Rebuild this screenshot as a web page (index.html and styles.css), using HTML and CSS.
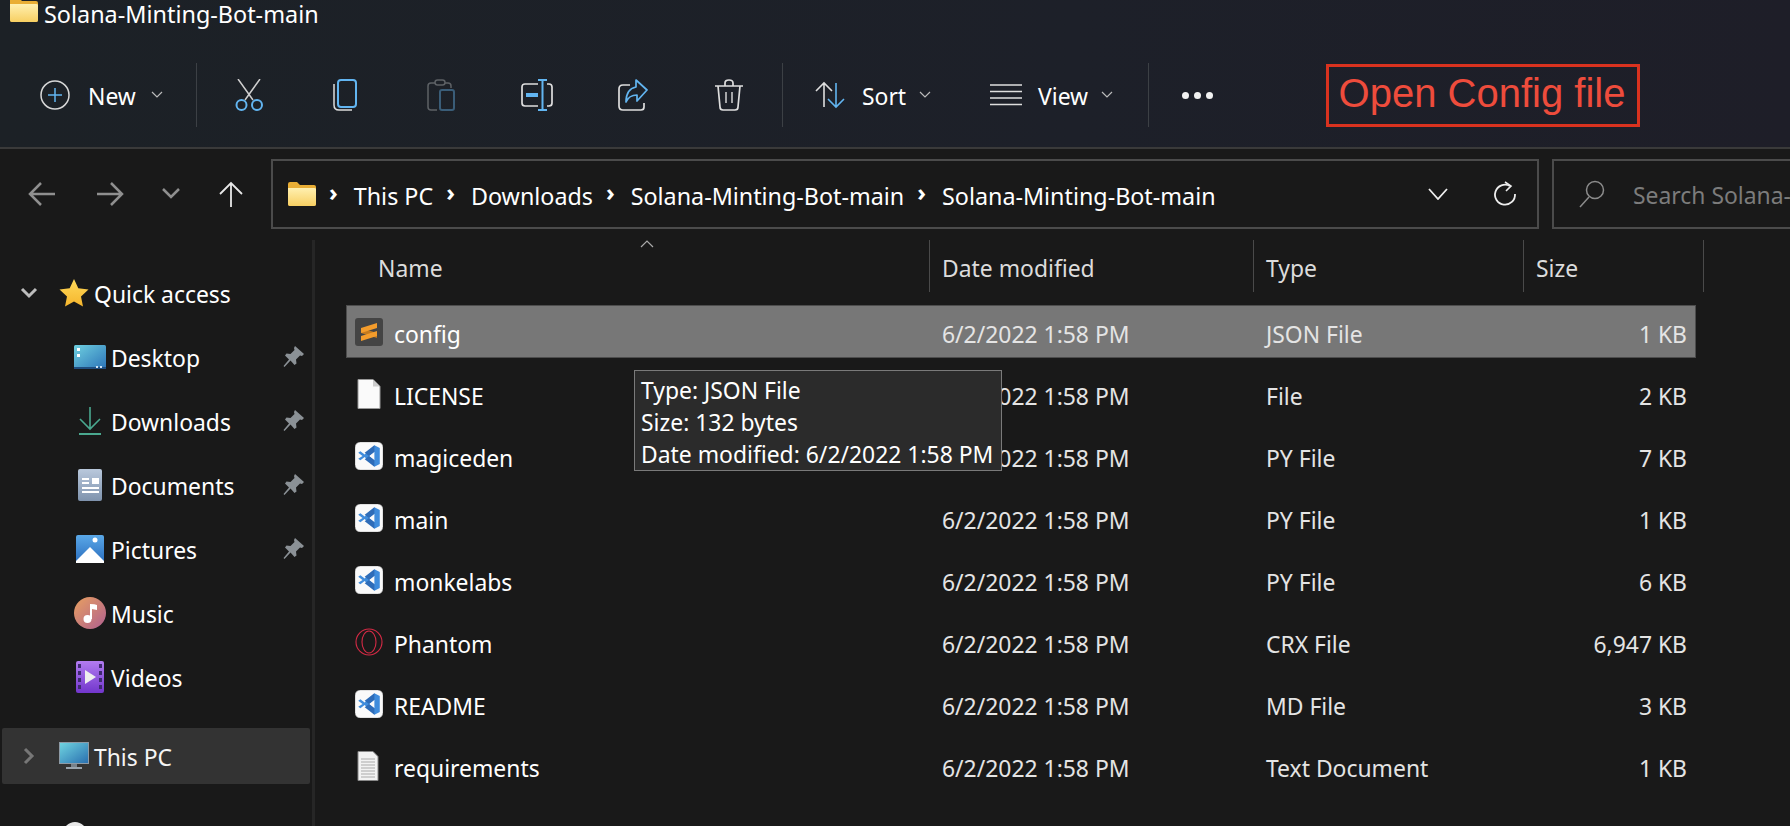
FILE: index.html
```html
<!DOCTYPE html>
<html lang="en">
<head>
    <meta charset="UTF-8">
    <title>Solana-Minting-Bot-main</title>
    <link rel="stylesheet" href="styles.css">
</head>
<body>
    <svg class="defs" width="0" height="0">
        <defs>
            <linearGradient id="folderGrad" x1="0" y1="0" x2="0" y2="1">
                <stop offset="0" stop-color="#fff0b0"/>
                <stop offset="1" stop-color="#f7cf62"/>
            </linearGradient>
            <symbol id="folder" viewBox="0 0 28 24">
                <path d="M0 2q0-2 2-2h7l3 3h14q2 0 2 2v17q0 2-2 2H2q-2 0-2-2z" fill="#e9ae35"/>
                <path d="M0 6h26q2 0 2 1v15q0 2-2 2H2q-2 0-2-2z" fill="url(#folderGrad)"/>
            </symbol>
            <symbol id="pin" viewBox="0 0 22 22">
                <path d="M12 1l9 8-2 2-2-.5-4 4 .5 4-2 1.500-4-4.500-6 6.500-1-1 5.500-6.500-4-4 1.500-2 4 .5 4-4-.5-2z" fill="#8b9196"/>
            </symbol>
            <symbol id="vscode" viewBox="0 0 26 26">
                <rect width="26" height="26" rx="5" fill="#fafafa" stroke="#999" stroke-width=".5"/>
                <path d="M18 3l5 2.500v15l-5 2.500-9-9-4 3-2-1.500 4-2.500-4-3 2-1.500 4 3zM18 9l-5 4 5 4z" fill="#3f8cdc"/>
                <path d="M18 3v6l-5 4-4-3z" fill="#2e6cb8"/>
                <path d="M9 16l4-3 5 4v6z" fill="#2e6cb8"/>
            </symbol>
        </defs>
    </svg>

    <div class="window">
        <header class="chrome">
            <div class="title-row">
                <svg class="title-icon" width="28" height="24"><use href="#folder"/></svg>
                <span>Solana-Minting-Bot-main</span>
            </div>
            <div class="toolbar">
                <button class="tool tool-new">
                    <svg width="30" height="30" viewBox="0 0 30 30" fill="none">
                        <circle cx="15" cy="15" r="14" stroke="#d8d8d8" stroke-width="1.500"/>
                        <path d="M15 8v14M8 15h14" stroke="#62b5f1" stroke-width="1.500"/>
                    </svg>
                    <span>New</span>
                    <svg class="caret" width="12" height="8" viewBox="0 0 12 8" fill="none"><path d="M1 1l5 5 5-5" stroke="#bbb" stroke-width="1.200"/></svg>
                </button>
                <div class="tool-sep"></div>
                <div class="tool-icons">
                    <button class="tool-icon">
                        <svg width="28" height="32" viewBox="0 0 28 32" fill="none">
                            <path d="M3 0l15 21M25 0L10 21" stroke="#cfcfcf" stroke-width="1.500"/>
                            <circle cx="6.500" cy="26" r="5" stroke="#62b5f1" stroke-width="2"/>
                            <circle cx="22" cy="26" r="5" stroke="#62b5f1" stroke-width="2"/>
                        </svg>
                    </button>
                    <button class="tool-icon">
                        <svg width="24" height="32" viewBox="0 0 24 32" fill="none">
                            <path d="M1 5v21q0 5 5 5h13" stroke="#dcdcdc" stroke-width="1.500"/>
                            <rect x="5" y="1" width="18" height="27" rx="3" stroke="#62b5f1" stroke-width="2"/>
                        </svg>
                    </button>
                    <button class="tool-icon">
                        <svg width="28" height="32" viewBox="0 0 28 32" fill="none">
                            <path d="M10 31H4q-3 0-3-3V7q0-3 3-3h4M18 4h3q3 0 3 3v2" stroke="#5d6165" stroke-width="1.500"/>
                            <rect x="8" y="1" width="10" height="5" rx="2.500" stroke="#5d6165" stroke-width="1.500"/>
                            <rect x="13" y="11" width="14" height="20" rx="2" stroke="#3a5d78" stroke-width="2"/>
                        </svg>
                    </button>
                    <button class="tool-icon">
                        <svg width="32" height="32" viewBox="0 0 32 32" fill="none">
                            <path d="M17 5H4q-3 0-3 3v16q0 3 3 3h13M26 5h2q3 0 3 3v16q0 3-3 3h-2" stroke="#dedede" stroke-width="1.700"/>
                            <path d="M5 16h12" stroke="#62b5f1" stroke-width="4"/>
                            <path d="M17 1h9M21.500 1v30M17 31h9" stroke="#62b5f1" stroke-width="2"/>
                        </svg>
                    </button>
                    <button class="tool-icon">
                        <svg width="30" height="32" viewBox="0 0 30 32" fill="none">
                            <path d="M12 6H5Q1 6 1 10v17q0 4 4 4h18q3 0 3-3v-4" stroke="#dedede" stroke-width="1.700"/>
                            <path d="M18 1l11 10-10 11v-6q-8 0-11 7 0-13 10-15z" stroke="#62b5f1" stroke-width="1.700" stroke-linejoin="round"/>
                        </svg>
                    </button>
                    <button class="tool-icon">
                        <svg width="30" height="32" viewBox="0 0 30 32" fill="none" stroke="#dedede" stroke-width="1.700">
                            <path d="M1 7h28M11 7V4q0-3 4-3t4 3v3M4 7l2 21q0 3 3 3h12q3 0 3-3l2-21"/>
                            <path d="M12 13v11M18 13v11" stroke-width="1.400"/>
                        </svg>
                    </button>
                </div>
                <div class="tool-sep"></div>
                <button class="tool tool-sort">
                    <svg width="32" height="28" viewBox="0 0 32 28" fill="none">
                        <path d="M10 26V2M2 10l8-8 8 8" stroke="#dedede" stroke-width="1.600"/>
                        <path d="M22 2v24M14 18l8 8 8-8" stroke="#62b5f1" stroke-width="1.600"/>
                    </svg>
                    <span>Sort</span>
                    <svg class="caret" width="12" height="8" viewBox="0 0 12 8" fill="none"><path d="M1 1l5 5 5-5" stroke="#bbb" stroke-width="1.200"/></svg>
                </button>
                <button class="tool tool-view">
                    <svg width="32" height="22" viewBox="0 0 32 22" fill="none" stroke="#dedede" stroke-width="1.500">
                        <path d="M0 1h32M0 7.500h32M0 14h32M0 20.500h32"/>
                    </svg>
                    <span>View</span>
                    <svg class="caret" width="12" height="8" viewBox="0 0 12 8" fill="none"><path d="M1 1l5 5 5-5" stroke="#bbb" stroke-width="1.200"/></svg>
                </button>
                <div class="tool-sep"></div>
                <div class="tool-more"><i></i><i></i><i></i></div>
            </div>
        </header>

        <div class="nav-row">
            <div class="nav-buttons">
                <svg width="28" height="26" viewBox="0 0 28 26" fill="none" stroke="#8f8f8f" stroke-width="2.500"><path d="M28 13H3M14 2L3 13l11 11"/></svg>
                <svg width="28" height="26" viewBox="0 0 28 26" fill="none" stroke="#8f8f8f" stroke-width="2.500"><path d="M0 13h25M14 2l11 11-11 11"/></svg>
                <svg width="18" height="12" viewBox="0 0 18 12" fill="none" stroke="#8f8f8f" stroke-width="2.500"><path d="M1 1l8 8 8-8"/></svg>
                <svg width="24" height="26" viewBox="0 0 24 26" fill="none" stroke="#e8e8e8" stroke-width="1.800"><path d="M12 26V2M1 13L12 2l11 11"/></svg>
            </div>
            <div class="address">
                <svg class="address-folder" width="28" height="24"><use href="#folder"/></svg>
                <span class="crumb-sep">›</span>
                <span>This PC</span>
                <span class="crumb-sep">›</span>
                <span>Downloads</span>
                <span class="crumb-sep">›</span>
                <span>Solana-Minting-Bot-main</span>
                <span class="crumb-sep">›</span>
                <span>Solana-Minting-Bot-main</span>
                <svg class="address-down" width="20" height="12" viewBox="0 0 20 12" fill="none" stroke="#eee" stroke-width="1.800"><path d="M1 1l9 10 9-10"/></svg>
                <svg class="address-refresh" width="24" height="26" viewBox="0 0 24 26" fill="none" stroke="#eee" stroke-width="1.800">
                    <path d="M17 5a10 10 0 1 0 5 8"/>
                    <path d="M12 1l6 4-5 5" stroke-width="1.600"/>
                </svg>
            </div>
            <div class="search">
                <svg width="26" height="28" viewBox="0 0 26 28" fill="none" stroke="#8c8c8c" stroke-width="1.500">
                    <circle cx="16" cy="10" r="8.500"/>
                    <path d="M10 17L1 27"/>
                </svg>
                <span>Search Solana-Minting-Bot-main</span>
            </div>
        </div>

        <div class="content">
            <aside class="sidebar">
                <div class="tree-row tree-top">
                    <svg class="tree-toggle" width="18" height="12" viewBox="0 0 18 12" fill="none" stroke="#bdbdbd" stroke-width="3"><path d="M2 2l7 7 7-7"/></svg>
                    <svg class="tree-icon-top" width="30" height="30" viewBox="0 0 30 30">
                        <defs><linearGradient id="starGrad" x1="0" y1="0" x2="0" y2="1"><stop offset="0" stop-color="#ffd95a"/><stop offset="1" stop-color="#f5b52c"/></linearGradient></defs>
                        <path d="M15 1l4.300 9.300 10.200 1.200-7.500 7 2 10.100-9-5-9 5 2-10.100-7.500-7 10.200-1.200z" fill="url(#starGrad)"/>
                    </svg>
                    <span>Quick access</span>
                </div>
                <div class="tree-row tree-child">
                    <svg class="tree-icon" width="32" height="24" viewBox="0 0 32 24">
                        <defs><linearGradient id="deskGrad" x1="0" y1="0" x2="1" y2="1"><stop offset="0" stop-color="#6fd0e0"/><stop offset="1" stop-color="#2c74b8"/></linearGradient></defs>
                        <rect width="32" height="24" rx="1.500" fill="url(#deskGrad)"/>
                        <rect y="22" width="32" height="2" fill="#1f4e80"/>
                        <path d="M3 3h3v3H3zM3 9h3v3H3z" fill="#fff"/>
                        <path d="M22 21h2v2h-2zM26 21h2v2h-2z" fill="#cfe4f5"/>
                    </svg>
                    <span>Desktop</span>
                    <svg class="tree-pin" width="22" height="22"><use href="#pin"/></svg>
                </div>
                <div class="tree-row tree-child">
                    <svg class="tree-icon" width="32" height="28" viewBox="0 0 32 28" fill="none" stroke="#4aa88f" stroke-width="1.600">
                        <path d="M16 0v21M6 12l10 10 10-10"/>
                        <path d="M5 27h22" stroke-width="2"/>
                    </svg>
                    <span>Downloads</span>
                    <svg class="tree-pin" width="22" height="22"><use href="#pin"/></svg>
                </div>
                <div class="tree-row tree-child">
                    <svg class="tree-icon" width="32" height="32" viewBox="0 0 32 32">
                        <defs><linearGradient id="docGrad" x1="0" y1="0" x2="0" y2="1"><stop offset="0" stop-color="#b9c8dc"/><stop offset="1" stop-color="#7f93ad"/></linearGradient></defs>
                        <rect x="4" width="24" height="32" rx="2" fill="url(#docGrad)"/>
                        <path d="M8 9h7v2H8zM8 13h7v2H8zM8 18h17v2H8zM8 22h17v2H8zM18 9h7v6h-7z" fill="#fff"/>
                    </svg>
                    <span>Documents</span>
                    <svg class="tree-pin" width="22" height="22"><use href="#pin"/></svg>
                </div>
                <div class="tree-row tree-child">
                    <svg class="tree-icon" width="32" height="28" viewBox="0 0 32 28">
                        <defs><linearGradient id="picGrad" x1="0" y1="0" x2="0" y2="1"><stop offset="0" stop-color="#5aa8e8"/><stop offset="1" stop-color="#2a6dbd"/></linearGradient></defs>
                        <rect x="2" width="28" height="28" rx="2" fill="url(#picGrad)"/>
                        <path d="M2 26L16 12l14 14v2H2z" fill="#fff"/>
                        <circle cx="21" cy="5" r="2.500" fill="#fff"/>
                    </svg>
                    <span>Pictures</span>
                    <svg class="tree-pin" width="22" height="22"><use href="#pin"/></svg>
                </div>
                <div class="tree-row tree-child">
                    <svg class="tree-icon" width="32" height="32" viewBox="0 0 32 32">
                        <defs><linearGradient id="musicGrad" x1="0" y1="0" x2="1" y2="1"><stop offset="0" stop-color="#e8a060"/><stop offset="1" stop-color="#b0608f"/></linearGradient></defs>
                        <circle cx="16" cy="16" r="16" fill="url(#musicGrad)"/>
                        <circle cx="13.500" cy="22" r="4" fill="#fff"/>
                        <path d="M16 22V7q5 0 7 1v5l-5-1v10z" fill="#fff"/>
                    </svg>
                    <span>Music</span>
                </div>
                <div class="tree-row tree-child">
                    <svg class="tree-icon" width="32" height="32" viewBox="0 0 32 32">
                        <defs><linearGradient id="videoGrad" x1="0" y1="0" x2="0" y2="1"><stop offset="0" stop-color="#b27cf0"/><stop offset="1" stop-color="#7236cc"/></linearGradient></defs>
                        <rect x="2" width="28" height="32" rx="2" fill="url(#videoGrad)"/>
                        <path d="M4 3h3v4H4zM4 10h3v4H4zM4 17h3v4H4zM4 24h3v4H4zM25 3h3v4h-3zM25 10h3v4h-3zM25 17h3v4h-3zM25 24h3v4h-3z" fill="#3f2a70"/>
                        <path d="M11 9l11 7-11 7z" fill="#eee"/>
                    </svg>
                    <span>Videos</span>
                </div>
                <div class="tree-row tree-top tree-hover">
                    <svg class="tree-toggle" width="12" height="18" viewBox="0 0 12 18" fill="none" stroke="#777" stroke-width="3"><path d="M2 2l7 7-7 7"/></svg>
                    <svg class="tree-icon-top" width="30" height="28" viewBox="0 0 30 28">
                        <defs><linearGradient id="pcGrad" x1="0" y1="0" x2="1" y2="1"><stop offset="0" stop-color="#6fd4e0"/><stop offset="1" stop-color="#2a70b0"/></linearGradient></defs>
                        <rect width="30" height="22" fill="#8d9aa5"/>
                        <rect x="1" y="1" width="28" height="20" fill="url(#pcGrad)"/>
                        <rect x="12" y="22" width="6" height="3" fill="#77818a"/>
                        <rect x="7" y="25" width="16" height="2" fill="#9aa4ad"/>
                    </svg>
                    <span>This PC</span>
                </div>
                <div class="tree-next"></div>
            </aside>

            <main class="files">
                <div class="file-grid file-head">
                    <svg class="sort-caret" width="14" height="8" viewBox="0 0 14 8" fill="none" stroke="#aaa" stroke-width="1.200"><path d="M1 7l6-6 6 6"/></svg>
                    <div class="head-name">Name</div>
                    <div class="head-cell">Date modified</div>
                    <div class="head-cell">Type</div>
                    <div class="head-cell head-last">Size</div>
                </div>

                <div class="file-grid file-row selected">
                    <div class="file-name">
                        <svg width="28" height="28" viewBox="0 0 28 28">
                            <rect width="28" height="28" rx="3" fill="#444"/>
                            <path d="M6 10l16 5v5L6 15z" fill="#c47a1e"/>
                            <path d="M6 10l16-5v5L6 15zM6 18l16-5v5L6 23z" fill="#f39c2c"/>
                        </svg>
                        <span>config</span>
                    </div>
                    <div class="file-cell">6/2/2022 1:58 PM</div>
                    <div class="file-cell">JSON File</div>
                    <div class="file-cell file-size">1 KB</div>
                </div>
                <div class="file-grid file-row">
                    <div class="file-name">
                        <svg width="28" height="30" viewBox="0 0 28 30">
                            <path d="M3 .5h15l7 7v22H3z" fill="#fafafa" stroke="#999"/>
                            <path d="M18 .5v7h7" fill="#ccc"/>
                        </svg>
                        <span>LICENSE</span>
                    </div>
                    <div class="file-cell">6/2/2022 1:58 PM</div>
                    <div class="file-cell">File</div>
                    <div class="file-cell file-size">2 KB</div>
                </div>
                <div class="file-grid file-row">
                    <div class="file-name">
                        <svg width="28" height="28"><use href="#vscode"/></svg>
                        <span>magiceden</span>
                    </div>
                    <div class="file-cell">6/2/2022 1:58 PM</div>
                    <div class="file-cell">PY File</div>
                    <div class="file-cell file-size">7 KB</div>
                </div>
                <div class="file-grid file-row">
                    <div class="file-name">
                        <svg width="28" height="28"><use href="#vscode"/></svg>
                        <span>main</span>
                    </div>
                    <div class="file-cell">6/2/2022 1:58 PM</div>
                    <div class="file-cell">PY File</div>
                    <div class="file-cell file-size">1 KB</div>
                </div>
                <div class="file-grid file-row">
                    <div class="file-name">
                        <svg width="28" height="28"><use href="#vscode"/></svg>
                        <span>monkelabs</span>
                    </div>
                    <div class="file-cell">6/2/2022 1:58 PM</div>
                    <div class="file-cell">PY File</div>
                    <div class="file-cell file-size">6 KB</div>
                </div>
                <div class="file-grid file-row">
                    <div class="file-name">
                        <svg width="28" height="28" viewBox="0 0 28 28" fill="none" stroke="#d42a45" stroke-width="1.100">
                            <circle cx="14" cy="14" r="13"/>
                            <ellipse cx="14" cy="14" rx="7" ry="11"/>
                        </svg>
                        <span>Phantom</span>
                    </div>
                    <div class="file-cell">6/2/2022 1:58 PM</div>
                    <div class="file-cell">CRX File</div>
                    <div class="file-cell file-size">6,947 KB</div>
                </div>
                <div class="file-grid file-row">
                    <div class="file-name">
                        <svg width="28" height="28"><use href="#vscode"/></svg>
                        <span>README</span>
                    </div>
                    <div class="file-cell">6/2/2022 1:58 PM</div>
                    <div class="file-cell">MD File</div>
                    <div class="file-cell file-size">3 KB</div>
                </div>
                <div class="file-grid file-row">
                    <div class="file-name">
                        <svg width="28" height="30" viewBox="0 0 28 30">
                            <path d="M3 .5h15l5 5v24H3z" fill="#f2f2f2" stroke="#888"/>
                            <path d="M6 8h14M6 11h14M6 14h14M6 17h14M6 20h14M6 23h14M6 26h14" stroke="#aaa"/>
                        </svg>
                        <span>requirements</span>
                    </div>
                    <div class="file-cell">6/2/2022 1:58 PM</div>
                    <div class="file-cell">Text Document</div>
                    <div class="file-cell file-size">1 KB</div>
                </div>
            </main>
        </div>

        <div class="callout">Open Config file</div>
        <div class="tooltip">
            <div>Type: JSON File</div>
            <div>Size: 132 bytes</div>
            <div>Date modified: 6/2/2022 1:58 PM</div>
        </div>
    </div>
</body>
</html>
```

FILE: styles.css
```css
* {
    margin: 0;
    padding: 0;
    box-sizing: border-box;
    font-family: "Noto Sans", "Open Sans", sans-serif;
}

html, body {
    height: 100%;
    overflow: hidden;
}

body {
    background-color: #191919;
    color: #ffffff;
    font-size: 22.900px;
}

button {
    background: none;
    border: none;
    color: inherit;
    font-size: inherit;
}

svg {
    display: block;
    flex: none;
}

.defs {
    position: absolute;
}

.window {
    position: relative;
    height: 826px;
    overflow: hidden;
}

/* top title and command bar */
.chrome {
    height: 149px;
    background: linear-gradient(90deg, #1c2126 0%, #1d2029 60%, #1e1e28 100%);
    border-bottom: 2px solid #3a3a3a;
}

.title-row {
    display: flex;
    align-items: flex-start;
    height: 63px;
    padding-left: 10px;
    gap: 6px;
    font-size: 23.400px;
    line-height: 28px;
}

.title-icon {
    margin-top: -2px;
}

.toolbar {
    display: flex;
    align-items: center;
    height: 64px;
}

.tool {
    display: flex;
    align-items: center;
    flex: none;
}

.tool span {
    padding-top: 3px;
}

.tool .caret {
    margin-left: -3px;
}

.tool-new {
    width: 196px;
    padding-left: 40px;
    gap: 18px;
}

.tool-sep {
    width: 1px;
    height: 64px;
    background-color: #3c4045;
    flex: none;
}

.tool-icons {
    display: flex;
    flex: none;
    width: 585px;
    padding-left: 4px;
}

.tool-icon {
    display: flex;
    justify-content: center;
    width: 96px;
}

.tool-sort {
    width: 193px;
    padding-left: 31px;
    gap: 16px;
}

.tool-view {
    width: 172px;
    padding-left: 14px;
    gap: 16px;
}

.tool-more {
    display: flex;
    gap: 5px;
    margin-left: 33px;
}

.tool-more i {
    width: 7px;
    height: 7px;
    border-radius: 50%;
    background-color: #f2f2f2;
}

/* back / forward / address / search */
.nav-row {
    display: flex;
    height: 91px;
    padding-top: 10px;
}

.nav-buttons {
    display: flex;
    align-items: center;
    flex: none;
    width: 271px;
    height: 70px;
    padding-left: 27px;
}

.nav-buttons svg:nth-child(2) {
    margin-left: 42px;
}

.nav-buttons svg:nth-child(3) {
    margin-left: 37px;
}

.nav-buttons svg:nth-child(4) {
    margin-left: 39px;
}

.address {
    display: flex;
    align-items: center;
    flex: none;
    width: 1268px;
    height: 70px;
    border: 2px solid #4b4b4b;
    padding-left: 15px;
    gap: 13px;
    font-size: 23.300px;
}

.address span {
    padding-top: 3px;
}

.address .crumb-sep {
    font-weight: bold;
    font-size: 24px;
    line-height: 1;
    padding-top: 0;
    margin-top: -4px;
    margin-right: 3px;
}

.address-down {
    margin-left: auto;
}

.address-refresh {
    margin-left: 32px;
    margin-right: 20px;
}

.search {
    display: flex;
    align-items: center;
    flex: none;
    width: 400px;
    height: 70px;
    margin-left: 13px;
    border: 2px solid #4b4b4b;
    padding-left: 25px;
    gap: 28px;
    color: #7c7c7c;
    white-space: nowrap;
}

.search span {
    padding-top: 3px;
}

/* body of the window */
.content {
    display: flex;
    height: 586px;
}

.sidebar {
    width: 315px;
    flex: none;
    padding-top: 21px;
    padding-left: 2px;
    border-right: 3px solid #262626;
    padding-right: 2px;
}

.tree-row {
    position: relative;
    display: flex;
    align-items: center;
    height: 64px;
}

.tree-row span {
    padding-top: 3px;
}

.tree-top {
    padding-left: 18px;
}

.tree-toggle {
    width: 18px;
}

.tree-icon-top {
    margin-left: 21px;
    margin-right: 5px;
}

.tree-child {
    padding-left: 72px;
}

.tree-icon {
    width: 32px;
    margin-right: 5px;
}

.tree-pin {
    position: absolute;
    right: 5px;
    top: 20px;
}

.tree-hover {
    height: 56px;
    margin-top: 19px;
    background-color: #333333;
    border-radius: 2px;
    color: #f5f5f5;
}

.tree-next {
    width: 24px;
    height: 24px;
    margin: 38px 0 0 61px;
    background-color: #e8e8e8;
    border-radius: 50%;
}

.files {
    flex: 1;
    position: relative;
    padding-left: 31px;
}

.file-grid {
    display: grid;
    grid-template-columns: 583px 324px 270px 173px;
    width: 1350px;
}

.file-head {
    height: 52px;
    align-items: center;
    margin-bottom: 13px;
    color: #dcdcdc;
}

.sort-caret {
    position: absolute;
    left: 325px;
    top: 0;
}

.head-name {
    padding-left: 32px;
    padding-top: 5px;
}

.head-cell {
    height: 52px;
    line-height: 57px;
    padding-left: 12px;
    border-left: 1px solid #4a4a4a;
}

.head-last {
    border-right: 1px solid #4a4a4a;
    width: 181px;
}

.file-row {
    height: 53px;
    margin-bottom: 9px;
    align-items: center;
}

.selected {
    background-color: #777777;
    box-shadow: inset 0 0 0 1px #4d4d4d;
}

.file-name {
    display: flex;
    align-items: center;
    gap: 11px;
    padding-left: 9px;
}

.file-name span {
    padding-top: 5px;
}

.file-cell {
    padding-left: 13px;
    padding-top: 5px;
    color: #e4e4e4;
}

.file-size {
    padding-right: 9px;
    text-align: right;
}

/* things on top of the window */
.callout {
    position: absolute;
    left: 1326px;
    top: 64px;
    width: 314px;
    height: 63px;
    padding-right: 2px;
    border: 3px solid #d9321f;
    color: #ee4c3c;
    font-family: "Liberation Sans", Arial, sans-serif;
    font-size: 40px;
    line-height: 52px;
    text-align: center;
}

.tooltip {
    position: absolute;
    left: 634px;
    top: 370px;
    width: 368px;
    height: 101px;
    padding: 4px 6px;
    background-color: #2b2b2b;
    border: 1px solid #7a7a7a;
    line-height: 32px;
    white-space: nowrap;
}
```
